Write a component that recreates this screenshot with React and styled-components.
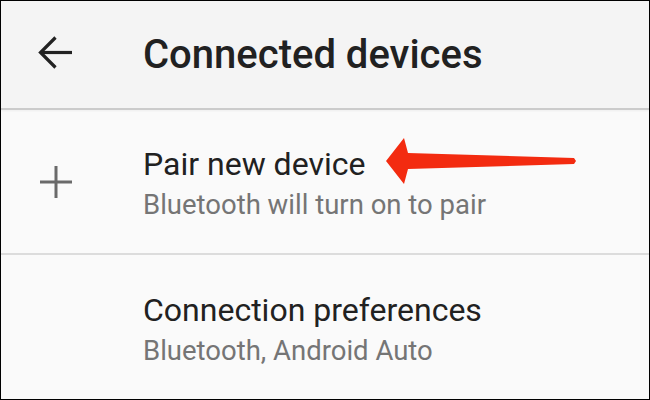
import React from "react";
import styled, { createGlobalStyle } from "styled-components";

const Global = createGlobalStyle`
  html, body { margin: 0; padding: 0; background: #fafafa; }
  body { font-family: Roboto, "Noto Sans", "Liberation Sans", sans-serif; }
`;

const Frame = styled.div`
  position: relative;
  width: 650px;
  height: 400px;
  box-sizing: border-box;
  border: 1px solid #000;
  background: #fafafa;
  display: flex;
  flex-direction: column;
  overflow: hidden;
`;

const Toolbar = styled.header`
  height: 107px;
  flex: none;
  display: flex;
  align-items: center;
  background: #f4f4f4;
  border-bottom: 2px solid #cbcbcb;
  box-shadow: 0 1px 2px rgba(0, 0, 0, 0.05);
  position: relative;
  z-index: 1;
`;

const IconCell = styled.div`
  width: 110px;
  flex: none;
  display: flex;
  align-items: center;
  justify-content: center;
  margin-right: 32px;
`;

const ToolbarTitle = styled.h1`
  margin: 0;
  font-size: 40px;
  font-weight: 500;
  color: #212121;
  line-height: 46px;
`;

const Row = styled.div`
  height: ${(p) => (p.$fill ? "auto" : "143px")};
  flex: ${(p) => (p.$fill ? "1" : "none")};
  display: flex;
  align-items: center;
  border-bottom: ${(p) => (p.$divider ? "2px solid #dcdcdc" : "none")};
`;

const TextBlock = styled.div`
  display: flex;
  flex-direction: column;
  padding-top: 3px;
`;

const Title = styled.div`
  font-size: 32px;
  line-height: 38px;
  color: #212121;
`;

const Subtitle = styled.div`
  font-size: 27.5px;
  line-height: 32px;
  margin-top: 6px;
  color: #757575;
`;

const Pointer = styled.svg`
  position: absolute;
  left: 379px;
  top: 129px;
  width: 200px;
  height: 60px;
  pointer-events: none;
`;

const BackIcon = () => (
  <svg width="48" height="48" viewBox="0 0 48 48" aria-hidden="true">
    <g fill="none" stroke="#222" strokeWidth="3.2" strokeLinejoin="miter">
      <line x1="9" y1="21.5" x2="40" y2="21.5" />
      <polyline points="23.5,6.5 8.5,21.5 23.5,36.5" />
    </g>
  </svg>
);

const PlusIcon = () => (
  <svg width="48" height="48" viewBox="0 0 48 48" aria-hidden="true">
    <g fill="none" stroke="#6a6a6a" strokeWidth="3">
      <line x1="8" y1="24" x2="40" y2="24" />
      <line x1="24" y1="8" x2="24" y2="40" />
    </g>
  </svg>
);

export default function App() {
  return (
    <>
      <Global />
      <Frame>
        <Toolbar>
          <IconCell>
            <BackIcon />
          </IconCell>
          <ToolbarTitle>Connected devices</ToolbarTitle>
        </Toolbar>
        <Row $divider>
          <IconCell>
            <PlusIcon />
          </IconCell>
          <TextBlock>
            <Title>Pair new device</Title>
            <Subtitle>Bluetooth will turn on to pair</Subtitle>
          </TextBlock>
        </Row>
        <Row $fill>
          <IconCell />
          <TextBlock>
            <Title>Connection preferences</Title>
            <Subtitle>Bluetooth, Android Auto</Subtitle>
          </TextBlock>
        </Row>
        <Pointer viewBox="0 0 200 60" aria-hidden="true">
          <polygon
            fill="#f32b10"
            points="6,31 24,8 28,23 194,28 196,31 194,34 28,39 24,54"
          />
        </Pointer>
      </Frame>
    </>
  );
}
